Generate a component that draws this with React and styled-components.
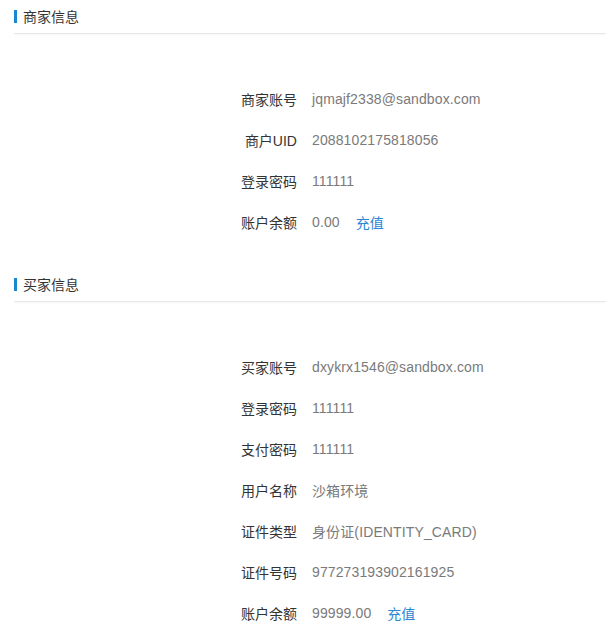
import styled, { createGlobalStyle } from "styled-components";

const GlobalStyle = createGlobalStyle`
  body {
    margin: 0;
    background: #fff;
    font-family: "Liberation Sans", "Noto Sans CJK SC", sans-serif;
  }
`;

const Page = styled.div`
  width: 607px;
  padding: 0 1px 0 14px;
  box-sizing: border-box;
`;

const Section = styled.section`
  margin-bottom: 26px;
`;

const Header = styled.div`
  display: flex;
  align-items: center;
  height: 32px;
  padding-bottom: 1px;
  border-bottom: 1px solid #e8e8e8;
  box-shadow: 0 2px 2px -1px #f6f6f6;
`;

const Bar = styled.span`
  width: 3px;
  height: 13px;
  background: #1a87d2;
  margin-right: 6px;
`;

const Title = styled.h3`
  margin: 0;
  font-size: 14px;
  font-weight: normal;
  color: #333;
`;

const List = styled.div`
  padding: 44px 0 0 163px;
`;

const Row = styled.div`
  display: flex;
  align-items: center;
  height: 41px;
  font-size: 14px;
`;

const Label = styled.span`
  width: 120px;
  text-align: right;
  color: #333;
`;

const Value = styled.span`
  margin-left: 15px;
  color: #7a7a7a;
  letter-spacing: 0.12px;
`;

const Recharge = styled.a`
  margin-left: 16px;
  color: #2a85d4;
  text-decoration: none;
  cursor: pointer;
`;

const merchant = [
  { label: "商家账号", value: "jqmajf2338@sandbox.com" },
  { label: "商户UID", value: "2088102175818056" },
  { label: "登录密码", value: "111111" },
  { label: "账户余额", value: "0.00", recharge: true },
];

const buyer = [
  { label: "买家账号", value: "dxykrx1546@sandbox.com" },
  { label: "登录密码", value: "111111" },
  { label: "支付密码", value: "111111" },
  { label: "用户名称", value: "沙箱环境" },
  { label: "证件类型", value: "身份证(IDENTITY_CARD)" },
  { label: "证件号码", value: "977273193902161925" },
  { label: "账户余额", value: "99999.00", recharge: true },
];

function InfoSection({ title, items }) {
  return (
    <Section>
      <Header>
        <Bar />
        <Title>{title}</Title>
      </Header>
      <List>
        {items.map((it) => (
          <Row key={it.label}>
            <Label>{it.label}</Label>
            <Value>{it.value}</Value>
            {it.recharge && <Recharge>充值</Recharge>}
          </Row>
        ))}
      </List>
    </Section>
  );
}

export default function App() {
  return (
    <>
      <GlobalStyle />
      <Page>
        <InfoSection title="商家信息" items={merchant} />
        <InfoSection title="买家信息" items={buyer} />
      </Page>
    </>
  );
}
